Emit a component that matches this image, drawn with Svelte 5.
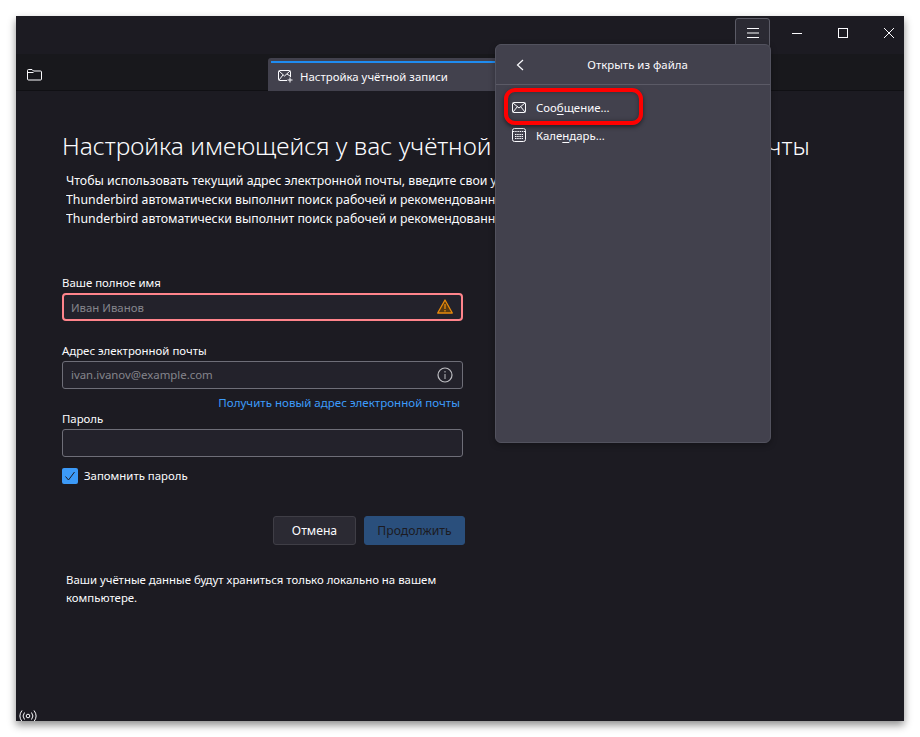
<script>
  let fullName = $state('');
  let email = $state('');
  let password = $state('');
  let remember = $state(true);
</script>

<div class="window">
  <header class="titlebar">
    <button class="menu-btn" aria-label="Меню">
      <svg width="14" height="12" viewBox="0 0 14 12" fill="none" stroke="#fbfbfe" stroke-width="1"><path d="M1 1.500h12M1 6h12M1 10.500h12" /></svg>
    </button>
    <div class="win-btn">
      <svg width="12" height="12" viewBox="0 0 12 12" stroke="#fbfbfe" fill="none"><path d="M1 6.500h10" /></svg>
    </div>
    <div class="win-btn">
      <svg width="12" height="12" viewBox="0 0 12 12" stroke="#fbfbfe" fill="none"><rect x="1.500" y="1.500" width="9" height="9" /></svg>
    </div>
    <div class="win-btn">
      <svg width="12" height="12" viewBox="0 0 12 12" stroke="#fbfbfe" fill="none"><path d="M1 1l10 10M11 1L1 11" /></svg>
    </div>
  </header>

  <nav class="tabbar">
    <svg class="folder" width="15" height="12" viewBox="0 0 15 12" fill="none" stroke="#fbfbfe"><path d="M.5 10V1.500a1 1 0 0 1 1-1h3.500l1.500 1.500h7a1 1 0 0 1 1 1V10a1 1 0 0 1-1 1h-12a1 1 0 0 1-1-1zM.5 3.500h6" /></svg>
    <div class="tab">
      <svg width="15" height="13" viewBox="0 0 15 13" fill="none" stroke="#fbfbfe"><path d="M9 10.500H1.500a1 1 0 0 1-1-1v-8a1 1 0 0 1 1-1h10a1 1 0 0 1 1 1V7M1 1l5.500 5L12 1M1 10l4-5M12 6L9 4" /><path d="M12 7.500v5M9.500 10h5" /></svg>
      <span>Настройка учётной записи</span>
    </div>
  </nav>

  <main class="content">
    <h1>Настройка имеющейся у вас учётной записи электронной почты</h1>
    <div class="intro">
      <p>Чтобы использовать текущий адрес электронной почты, введите свои учётные данные.</p>
      <p>Thunderbird автоматически выполнит поиск рабочей и рекомендованной конфигурации сервера.</p>
      <p>Thunderbird автоматически выполнит поиск рабочей и рекомендованной конфигурации сервера.</p>
    </div>

    <form class="form">
      <label for="fn">Ваше полное имя</label>
      <div class="field invalid">
        <input id="fn" placeholder="Иван Иванов" bind:value={fullName} />
        <svg width="16" height="15" viewBox="0 0 16 15"><path d="M8 1L15.300 14H.7z" fill="#5a3a10" stroke="#e98a0c" stroke-width="1.300" stroke-linejoin="round" /><path d="M8 5v5M8 11v1.500" stroke="#e98a0c" stroke-width="1.300" /></svg>
      </div>

      <label class="second" for="em">Адрес электронной почты</label>
      <div class="field">
        <input id="em" placeholder="ivan.ivanov@example.com" bind:value={email} />
        <svg width="16" height="16" viewBox="0 0 16 16" fill="none" stroke="#bdbdc2"><circle cx="8" cy="8" r="7" stroke-width="1.200" /><path d="M8 7v5M8 4v1.500" /></svg>
      </div>
      <a class="new-address" href="#new">Получить новый адрес электронной почты</a>

      <label for="pw">Пароль</label>
      <div class="field">
        <input id="pw" type="password" bind:value={password} />
      </div>

      <label class="remember">
        <input type="checkbox" bind:checked={remember} />
        <span class="box">
          <svg width="12" height="12" viewBox="0 0 12 12" fill="none" stroke="#1c1b22" stroke-width="1"><path d="M1.500 6.500l3 3.500 6-8" /></svg>
        </span>
        Запомнить пароль
      </label>

      <div class="actions">
        <button type="button" class="btn">Отмена</button>
        <button type="button" class="btn primary" disabled>Продолжить</button>
      </div>
    </form>

    <p class="note">Ваши учётные данные будут храниться только локально на вашем компьютере.</p>
  </main>

  <footer class="statusbar">
    <svg width="18" height="12" viewBox="0 0 18 12" fill="none" stroke="#fbfbfe"><circle cx="9" cy="6" r="1.800" /><path d="M5.500 2.500a5.500 5.500 0 0 0 0 7M12.500 2.500a5.500 5.500 0 0 1 0 7M3 .5a9 9 0 0 0 0 11M15 .5a9 9 0 0 1 0 11" /></svg>
  </footer>

  <aside class="popup">
    <div class="popup-head">
      <svg class="back" width="8" height="12" viewBox="0 0 8 12" fill="none" stroke="#fbfbfe" stroke-width="1.200"><path d="M7 1L1.500 6 7 11" /></svg>
      <span>Открыть из файла</span>
    </div>
    <div class="popup-list">
      <div class="item marked">
        <svg width="14" height="11" viewBox="0 0 14 11" fill="none" stroke="#fbfbfe"><rect x=".5" y=".5" width="13" height="10" rx="1" /><path d="M1 1l6 5 6-5M1 10l4.500-5.500M13 10L8.500 4.500" /></svg>
        <span>Соо<u>б</u>щение...</span>
      </div>
      <div class="item">
        <svg width="14" height="14" viewBox="0 0 14 14" fill="none" stroke="#fbfbfe"><rect x=".5" y=".5" width="13" height="13" rx="2" /><path d="M1 3.500h12M3 6.500h8M3 8.500h8M3 10.500h8" stroke-dasharray="1.500 .7" /></svg>
        <span>Кале<u>н</u>дарь...</span>
      </div>
    </div>
  </aside>
</div>

<style>
  :global(body) {
    background: #fff;
  }
  .window {
    position: relative;
    box-sizing: border-box;
    width: 888px;
    height: 705px;
    margin: 16px;
    display: flex;
    flex-direction: column;
    background: #1c1b22;
    color: #fbfbfe;
    font-family: "Noto Sans", "Open Sans", sans-serif;
    font-size: 11.400px;
    box-shadow: 0 4px 8px rgba(0, 0, 0, 0.45);
    overflow: hidden;
  }
  .titlebar {
    height: 38px;
    flex: none;
    display: flex;
    justify-content: flex-end;
    align-items: flex-start;
    background: #1c1b22;
  }
  .menu-btn {
    width: 35px;
    height: 30px;
    margin: 2px 4px 0 0;
    padding: 0;
    background: #2b2a33;
    border: 1px solid #5b5b66;
    border-radius: 3px;
    display: flex;
    align-items: center;
    justify-content: center;
  }
  .win-btn {
    width: 46px;
    height: 33px;
    display: flex;
    align-items: center;
    justify-content: center;
  }
  .win-btn:last-child {
    margin-right: -8px;
  }
  .tabbar {
    height: 37px;
    flex: none;
    display: flex;
    align-items: flex-end;
    background: #18181c;
    border-bottom: 1px solid #101014;
    box-sizing: border-box;
  }
  .folder {
    margin: 0 0 9px 11px;
  }
  .tab {
    position: relative;
    margin-left: 226px;
    width: 300px;
    height: 33px;
    margin-bottom: -1px;
    box-sizing: border-box;
    background: #42414d;
    border-radius: 3px 3px 0 0;
    display: flex;
    align-items: center;
    gap: 7px;
    padding: 3px 0 0 10px;
  }
  .tab::before {
    content: "";
    position: absolute;
    top: 3px;
    left: 3px;
    right: 3px;
    height: 2px;
    background: #1f8cf0;
  }
  .content {
    flex: 1;
    padding: 38px 0 0 46px;
    min-height: 0;
  }
  h1 {
    margin: 0;
    font-size: 24.500px;
    font-weight: 300;
    line-height: 34px;
    white-space: nowrap;
  }
  .intro {
    margin: 8px 0 0 4px;
    font-size: 12.300px;
  }
  .intro p {
    margin: 0;
    line-height: 19px;
    white-space: nowrap;
    overflow: hidden;
    width: 690px;
  }
  .form {
    width: 401px;
    margin-top: 46.500px;
    display: flex;
    flex-direction: column;
  }
  label {
    line-height: 16px;
    padding-bottom: 2px;
    display: block;
  }
  label.second {
    margin-top: 22px;
  }
  .field {
    height: 28px;
    box-sizing: border-box;
    border: 1px solid #6e6e78;
    border-radius: 3px;
    background: #23222b;
    display: flex;
    align-items: center;
    padding: 0 9px 0 8px;
  }
  .field.invalid {
    border: 2px solid #ff848b;
    border-radius: 4px;
    padding: 0 8px 0 7px;
  }
  .field.invalid input {
    padding-top: 1px;
  }
  .field input {
    flex: 1;
    min-width: 0;
    padding: 0;
    border: none;
    outline: none;
    background: none;
    color: #fbfbfe;
    font: inherit;
  }
  .field input::placeholder {
    color: #85858c;
    opacity: 1;
  }
  .new-address {
    align-self: flex-end;
    margin: 5px 3px -1px 0;
    font-size: 11.550px;
    line-height: 18px;
    color: #3d9bfa;
    text-decoration: none;
  }
  .remember {
    position: relative;
    display: flex;
    align-items: center;
    gap: 6px;
    margin-top: 10px;
    height: 18px;
    padding-bottom: 0;
    line-height: 18px;
  }
  .remember input {
    position: absolute;
    opacity: 0;
    margin: 0;
  }
  .box {
    width: 16px;
    height: 16px;
    border-radius: 2px;
    background: #3c9af8;
    display: flex;
    align-items: center;
    justify-content: center;
  }
  .actions {
    display: flex;
    justify-content: flex-end;
    gap: 8px;
    margin: 31px -2px 0 0;
  }
  .btn {
    height: 29px;
    width: 83px;
    padding: 1px 0 0;
    box-sizing: border-box;
    border: 1px solid #3f3e46;
    border-radius: 3px;
    background: #2b2a33;
    color: #fbfbfe;
    font: inherit;
    font-size: 12.200px;
  }
  .btn.primary {
    width: 101px;
    border-color: #2a4f7c;
    background: #2a4f7c;
    color: #1c1b22;
  }
  .note {
    width: 385px;
    margin: 26px 0 0 4px;
    line-height: 18px;
  }
  .statusbar {
    position: absolute;
    left: 3px;
    bottom: -1px;
    height: 12px;
  }
  .statusbar svg {
    display: block;
  }
  .popup {
    position: absolute;
    left: 479px;
    top: 28px;
    width: 276px;
    height: 399px;
    box-sizing: border-box;
    background: #42414d;
    border: 1px solid #52525e;
    border-radius: 6px;
    box-shadow: 0 2px 6px rgba(0, 0, 0, 0.3);
  }
  .popup-head {
    height: 40px;
    box-sizing: border-box;
    position: relative;
    display: flex;
    align-items: center;
    justify-content: center;
    padding-left: 9px;
    border-bottom: 1px solid #5b5a66;
  }
  .back {
    position: absolute;
    left: 20px;
  }
  .popup-list {
    padding: 8px 8px;
  }
  .item {
    height: 28px;
    display: flex;
    align-items: center;
    gap: 10px;
    padding-left: 8px;
  }
  .item u {
    text-underline-offset: 2px;
  }
  .marked {
    position: relative;
  }
  .marked::after {
    content: "";
    position: absolute;
    top: -5px;
    left: 0;
    width: 139px;
    height: 37px;
    box-sizing: border-box;
    border: 4px solid #f00;
    border-radius: 11px;
    box-shadow: 0 2px 4px rgba(0, 0, 0, 0.5), inset 0 0 4px rgba(0, 0, 0, 0.35);
  }
</style>
